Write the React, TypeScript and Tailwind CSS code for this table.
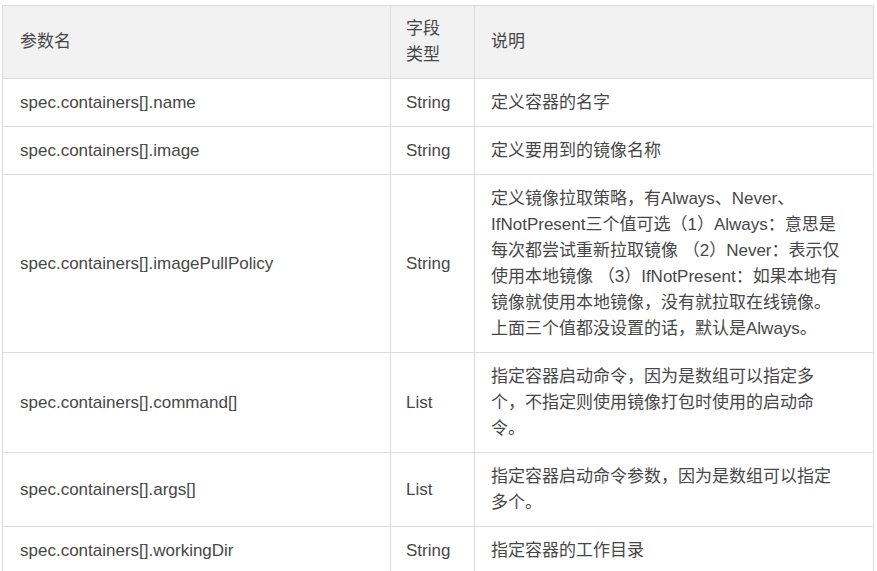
import React from "react";

const rows: { name: string; type: string; desc: string[] }[] = [
  { name: "spec.containers[].name", type: "String", desc: ["定义容器的名字"] },
  { name: "spec.containers[].image", type: "String", desc: ["定义要用到的镜像名称"] },
  {
    name: "spec.containers[].imagePullPolicy",
    type: "String",
    desc: [
      "定义镜像拉取策略，有Always、Never、",
      "IfNotPresent三个值可选（1）Always：意思是",
      "每次都尝试重新拉取镜像 （2）Never：表示仅",
      "使用本地镜像 （3）IfNotPresent：如果本地有",
      "镜像就使用本地镜像，没有就拉取在线镜像。",
      "上面三个值都没设置的话，默认是Always。",
    ],
  },
  {
    name: "spec.containers[].command[]",
    type: "List",
    desc: ["指定容器启动命令，因为是数组可以指定多", "个，不指定则使用镜像打包时使用的启动命", "令。"],
  },
  {
    name: "spec.containers[].args[]",
    type: "List",
    desc: ["指定容器启动命令参数，因为是数组可以指定", "多个。"],
  },
  { name: "spec.containers[].workingDir", type: "String", desc: ["指定容器的工作目录"] },
];

export default function App() {
  return (
    <div
      className="bg-white w-[877px] h-[571px] overflow-hidden pt-[5px] pl-[2px]"
      style={{ fontFamily: '"Liberation Sans", "Noto Sans CJK SC", sans-serif' }}
    >
      <table className="border-collapse w-[872px] table-fixed text-[17px] leading-[26px] text-[#474747]">
        <colgroup>
          <col className="w-[388px]" />
          <col className="w-[84px]" />
          <col />
        </colgroup>
        <thead>
          <tr className="bg-[#f2f2f2]">
            <th className="border border-[#dcdcdc] px-[17px] py-[10px] text-left font-normal align-middle">参数名</th>
            <th className="border border-[#dcdcdc] px-[15px] py-[10px] text-left font-normal align-middle">
              字段
              <br />
              类型
            </th>
            <th className="border border-[#dcdcdc] px-[16px] py-[10px] text-left font-normal align-middle">说明</th>
          </tr>
        </thead>
        <tbody>
          {rows.map((r) => (
            <tr key={r.name}>
              <td className="border border-[#dcdcdc] px-[17px] py-[10.5px] align-middle whitespace-nowrap">{r.name}</td>
              <td className="border border-[#dcdcdc] px-[15px] py-[10.5px] align-middle">{r.type}</td>
              <td className="border border-[#dcdcdc] px-[16px] py-[10.5px] align-middle">
                {r.desc.map((l, i) => (
                  <div key={i} className="whitespace-pre">
                    {l}
                  </div>
                ))}
              </td>
            </tr>
          ))}
        </tbody>
      </table>
    </div>
  );
}
